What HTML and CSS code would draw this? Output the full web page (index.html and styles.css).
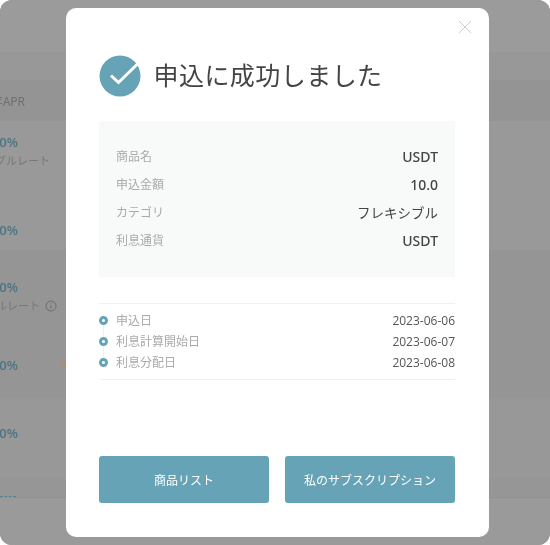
FILE: index.html
```html
<!DOCTYPE html>
<html lang="ja">
<head>
<meta charset="utf-8">
<title>申込に成功しました</title>
<link rel="stylesheet" href="styles.css">
</head>
<body>
<div class="stage">
  <div class="backdrop">
    <div class="band band-top"></div>
    <div class="band band-sub"></div>
    <div class="band band-head"><span class="cell">年APR</span></div>
    <div class="band band-a">
      <div class="cell rate rate-a1">10.0%</div>
      <div class="cell note">シングルレート</div>
      <div class="cell rate rate-a2">10.0%</div>
    </div>
    <div class="band band-b">
      <div class="cell rate rate-b1">10.0%</div>
      <div class="cell note note-b">
        <span>シングルレート</span>
        <svg class="info" viewBox="0 0 12 12"><circle cx="6" cy="6" r="5" fill="none" stroke="#6d6d6d"/><path d="M6 5.2v3.6M6 3.2v1" stroke="#6d6d6d"/></svg>
      </div>
      <div class="cell rate rate-b2">10.0%</div>
    </div>
    <div class="band band-c"><div class="cell rate rate-c">10.0%</div></div>
    <div class="band band-d"><span class="dash"></span></div>
    <div class="band band-e"></div>
  </div>
  <span class="hex"></span>

  <section class="modal">
    <button class="close" aria-label="閉じる">
      <svg viewBox="0 0 14 14"><path d="M1 1l12 12M13 1L1 13" fill="none" stroke="#c3cfd3" stroke-width="1"/></svg>
    </button>
    <header class="title-row">
      <svg class="ok" viewBox="0 0 42 42">
        <circle cx="21" cy="21" r="20.5" fill="#66a3b6"/>
        <path d="M12 20.5l7.5 7L39 8.5" fill="none" stroke="#fff" stroke-width="3"/>
      </svg>
      <h1>申込に成功しました</h1>
    </header>

    <dl class="panel">
      <div class="pair"><dt>商品名</dt><dd>USDT</dd></div>
      <div class="pair"><dt>申込金額</dt><dd>10.0</dd></div>
      <div class="pair"><dt>カテゴリ</dt><dd class="plain">フレキシブル</dd></div>
      <div class="pair"><dt>利息通貨</dt><dd>USDT</dd></div>
    </dl>

    <ul class="timeline">
      <li><span class="dot"></span><span class="when">申込日</span><span class="date">2023-06-06</span></li>
      <li><span class="dot"></span><span class="when">利息計算開始日</span><span class="date">2023-06-07</span></li>
      <li><span class="dot"></span><span class="when">利息分配日</span><span class="date">2023-06-08</span></li>
    </ul>

    <div class="actions">
      <button class="btn">商品リスト</button>
      <button class="btn">私のサブスクリプション</button>
    </div>
  </section>
</div>
</body>
</html>
```

FILE: styles.css
```css
* { box-sizing: border-box; }
html, body { margin: 0; padding: 0; background: #fff; }
body { font-family: "Open Sans", "Noto Sans CJK JP", sans-serif; }

.stage {
  position: relative;
  width: 550px;
  height: 545px;
  overflow: hidden;
  border-radius: 12px;
  background: #9a9a9a;
  filter: blur(0.35px);
}

.backdrop { display: flex; flex-direction: column; height: 100%; filter: blur(0.5px); }
.band { flex: none; }
.band-top { height: 52px; background: #9b9b9b; }
.band-sub { height: 28px; background: #989898; }
.band-head { height: 41px; background: #949494; display: flex; align-items: center; }
.band-a { height: 129px; background: #999; }
.band-b { height: 148px; background: #959595; }
.band-c { height: 80px; background: #989898; }
.band-d { height: 20px; background: #969696; position: relative; border-bottom: 1px solid #919191; }
.band-e { height: 47px; background: #9a9a9a; }

.cell {
  width: 25px;
  display: flex;
  justify-content: flex-end;
  white-space: nowrap;
  font-size: 12px;
  color: #6e6e6e;
}
.band-head .cell { display: inline-flex; width: 25px; justify-content: flex-end; }
.rate { font-size: 13px; font-weight: 600; color: #4c7483; width: 18px; line-height: 16px; }
.rate-a1 { margin-top: 13px; }
.note { width: 50px; font-size: 11px; line-height: 16px; margin-top: 3px; color: #787878; }
.rate-a2 { margin-top: 53px; }
.rate-b1 { margin-top: 29px; }
.note-b { width: 57px; align-items: center; gap: 5px; }
.info { width: 12px; height: 12px; flex: none; }
.rate-b2 { margin-top: 43px; }
.rate-c { margin-top: 27px; }
.dash { display: block; width: 16px; margin-top: 18px; border-top: 1px dashed #5d8391; }

.hex {
  position: absolute;
  left: 61px;
  top: 360px;
  width: 5px;
  height: 10px;
  background: #a1927a;
}

.modal {
  position: absolute;
  left: 65.5px;
  top: 8px;
  width: 423px;
  height: 529px;
  padding: 47px 33.5px 0;
  background: #fff;
  border-radius: 10px;
  display: flex;
  flex-direction: column;
}

.close {
  position: absolute;
  right: 17px;
  top: 12px;
  width: 14px;
  height: 14px;
  padding: 0;
  border: 0;
  background: none;
}
.close svg { display: block; width: 14px; height: 14px; }

.title-row { display: flex; align-items: flex-start; gap: 13px; height: 41px; }
.ok { width: 42px; height: 42px; flex: none; margin-left: -0.5px; }
h1 {
  margin: 0;
  font-size: 25px;
  font-weight: 400;
  line-height: 40px;
  color: #444;
  letter-spacing: 0.45px;
}

.panel {
  margin: 25px 0 0;
  height: 156px;
  padding: 25px 17px 0;
  background: #f8f9f9;
  display: flex;
  flex-direction: column;
  gap: 8px;
}
.pair { display: flex; justify-content: space-between; align-items: center; height: 20px; }
dt { font-size: 12px; color: #aaa; }
dd { margin: 0; font-family: "Noto Sans", "Noto Sans CJK JP", sans-serif; font-size: 14px; font-weight: 500; color: #444; }
dd.plain { font-size: 13.5px; font-weight: 400; }

.timeline {
  list-style: none;
  margin: 26px 0 0;
  padding: 6px 0 7px;
  border-top: 1px solid #f1f1f1;
  border-bottom: 1px solid #f1f1f1;
  display: flex;
  flex-direction: column;
  gap: 1px;
}
.timeline li { display: flex; align-items: center; height: 20px; position: relative; }
.timeline li + li::before {
  content: "";
  position: absolute;
  left: 3.5px;
  top: -10px;
  height: 20px;
  border-left: 1px solid #eef1f2;
}
.dot {
  width: 9px;
  height: 9px;
  border: 3px solid #66a3b6;
  border-radius: 50%;
  background: #fff;
  margin-right: 8px;
  position: relative;
  z-index: 1;
}
.when { font-size: 12px; color: #aaa; flex: 1; }
.date { font-size: 12px; color: #555; }

.actions { display: flex; gap: 16px; margin-top: 76px; }
.btn {
  flex: 1;
  height: 47px;
  padding: 0;
  border: 0;
  border-radius: 3px;
  background: #66a3b6;
  color: #fff;
  font: inherit;
  font-size: 12px;
}
```
